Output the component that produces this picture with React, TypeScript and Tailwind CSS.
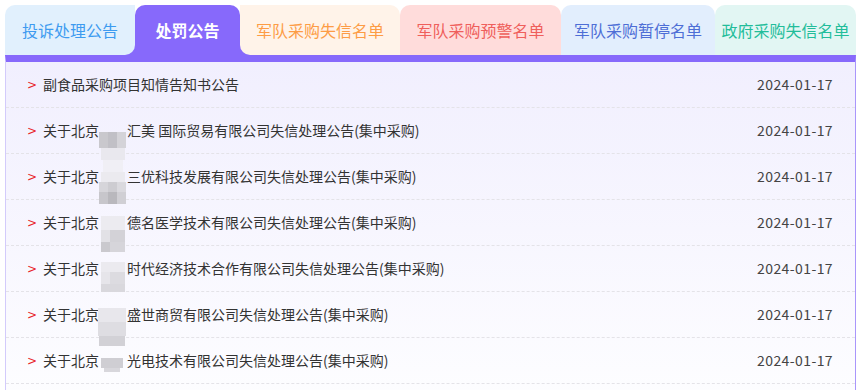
import React from "react";

// 顶部标签
const tabs = [
  { name: "投诉处理公告", w: "w-[130px]", cls: "bg-[#e1f0fd] text-[#3d9bf0] rounded-tl-[10px] rounded-br-[10px]" },
  { name: "处罚公告", w: "w-[105px]", cls: "bg-[#8769fb] text-white font-bold rounded-t-[10px]" },
  { name: "军队采购失信名单", w: "w-[160px]", cls: "bg-[#fff3e9] text-[#fd9c45] rounded-tr-[10px] rounded-bl-[10px]" },
  { name: "军队采购预警名单", w: "w-[161px]", cls: "bg-[#ffdcdb] text-[#ef5f5c] rounded-t-[10px]" },
  { name: "军队采购暂停名单", w: "w-[154px]", cls: "bg-[#e2eefd] text-[#4e6ed6] rounded-t-[10px]" },
  { name: "政府采购失信名单", w: "w-[141px]", cls: "bg-[#e2f6f3] text-[#22bd9a] rounded-t-[10px]" },
];

// 公告列表，hidden 表示中间被打码
const notices = [
  { pre: "副食品采购项目知情告知书公告", post: "", hidden: false },
  { pre: "关于北京", post: "汇美 国际贸易有限公司失信处理公告(集中采购)", hidden: true },
  { pre: "关于北京", post: "三优科技发展有限公司失信处理公告(集中采购)", hidden: true },
  { pre: "关于北京", post: "德名医学技术有限公司失信处理公告(集中采购)", hidden: true },
  { pre: "关于北京", post: "时代经济技术合作有限公司失信处理公告(集中采购)", hidden: true },
  { pre: "关于北京", post: "盛世商贸有限公司失信处理公告(集中采购)", hidden: true },
  { pre: "关于北京", post: "光电技术有限公司失信处理公告(集中采购)", hidden: true },
];

// 打码马赛克块 [left, top, width, height, color]，坐标相对列表区域
const mosaic: [number, number, number, number, string][] = [
  [93, 70, 9, 16, "#c9c8cd"], [102, 70, 9, 16, "#c1c0c6"], [111, 70, 9, 16, "#d4d3d8"],
  [95, 86, 24, 12, "#e9e8ee"], [97, 98, 20, 12, "#f0eff5"],
  [95, 110, 24, 10, "#ebeaef"], [93, 120, 9, 10, "#d6d5da"], [102, 120, 9, 10, "#cdccd1"], [111, 120, 9, 10, "#dad9de"],
  [93, 130, 9, 12, "#c7c6cb"], [102, 130, 9, 12, "#b9b8bd"], [111, 130, 9, 12, "#d0cfd4"],
  [95, 154, 24, 14, "#ecebf0"], [95, 168, 9, 12, "#e2e1e6"], [104, 168, 15, 12, "#d3d2d7"],
  [95, 180, 9, 10, "#cac9ce"], [104, 180, 15, 10, "#d6d5da"],
  [95, 200, 24, 10, "#ebeaef"], [95, 210, 9, 12, "#e6e5ea"], [104, 210, 15, 12, "#dcdbe0"],
  [95, 222, 24, 8, "#d9d8dd"],
  [92, 246, 28, 14, "#e8e7ec"], [92, 260, 28, 14, "#dedde2"], [93, 274, 26, 10, "#d2d1d6"],
  [95, 296, 22, 10, "#cfced3"], [98, 306, 16, 4, "#d8d7dc"],
];

export default function App() {
  return (
    <div className="w-[864px] h-[390px] overflow-hidden bg-white pt-[5px] px-[5px] font-['Microsoft_YaHei','Noto_Sans_CJK_SC',sans-serif]">
      {/* 标签栏 */}
      <div className="flex w-[851px] h-[50px] bg-[linear-gradient(to_bottom,transparent_38px,#8769fb_38px)]">
        {tabs.map((t) => (
          <div
            key={t.name}
            className={`${t.w} ${t.cls} h-[50px] shrink-0 flex items-center justify-center text-[16px]`}
          >
            {t.name}
          </div>
        ))}
      </div>

      {/* 列表面板 */}
      <div className="w-[851px] h-[340px] border-t-[7px] border-t-[#8769fb] border-l border-l-[#d3cbfb] border-r border-r-[#a996fb] bg-gradient-to-b from-[#f1effe] to-[#fdfdff]">
        <div className="relative">
          {notices.map((n, i) => (
            <div
              key={i}
              className="h-[46px] flex items-center border-b border-dashed border-[#e4e3e8] pl-[21px] pr-[22px]"
            >
              <span className="text-[#e8262a] text-[12px] w-[16px] font-['DejaVu_Sans',sans-serif]">&gt;</span>
              <span className="flex-1 text-[14px] text-[#333] whitespace-nowrap">
                {n.pre}
                {n.hidden && <span className="inline-block w-[28px]" />}
                {n.post}
              </span>
              <span className="text-[14px] tracking-[0.4px] text-[#444]">2024-01-17</span>
            </div>
          ))}
          {/* 打码区域 */}
          {mosaic.map(([l, t, w, h, c], i) => (
            <div
              key={i}
              className="absolute"
              style={{ left: l, top: t, width: w, height: h, background: c }}
            />
          ))}
        </div>
      </div>
    </div>
  );
}
